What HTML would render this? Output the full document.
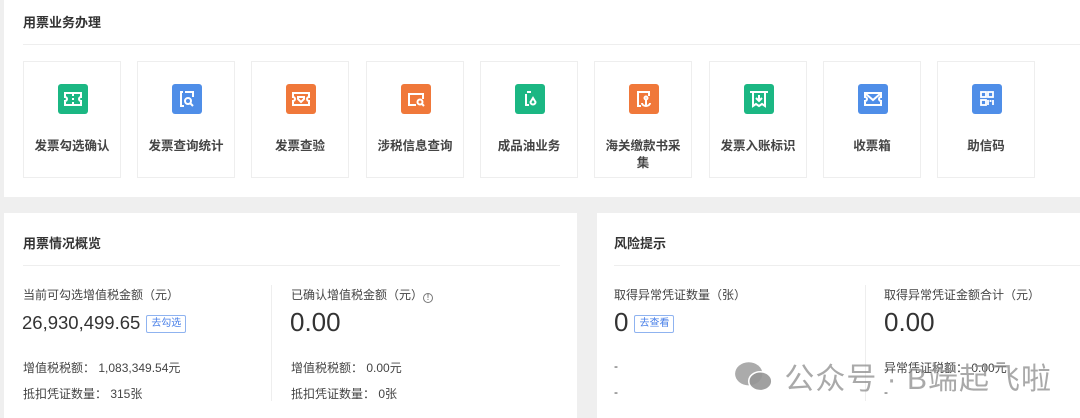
<!DOCTYPE html>
<html><head><meta charset="utf-8"><style>
*{margin:0;padding:0;box-sizing:border-box}
body{width:1080px;height:418px;background:#efefef;font-family:"Liberation Sans","Noto Sans CJK SC",sans-serif;color:#333;position:relative;overflow:hidden}
.card{position:absolute;background:#fff}
.title{position:absolute;font-size:13px;font-weight:bold;color:#333}
.hr{position:absolute;height:1px;background:#eee}
.tile{position:absolute;top:61px;width:98px;height:117px;border:1px solid #eee;text-align:center}
.ic{position:absolute;left:34px;top:22px;width:30px;height:30px;border-radius:3px}
.ic svg{width:30px;height:30px}
.lb{position:absolute;left:0;right:0;top:76px;font-size:12.5px;font-weight:bold;color:#444;line-height:17px}
.t{position:absolute;font-size:12px;color:#444;white-space:nowrap}
.big{position:absolute;color:#333;white-space:nowrap}
.btn{display:inline-block;border:1px solid #8fb3f0;color:#4a80e8;font-size:10px;padding:1px 4px;border-radius:2px;vertical-align:middle;margin-left:6px;line-height:14px}
.vl{position:absolute;width:1px;background:#eee}
</style></head><body>
<div class="card" style="left:4px;top:0;width:1076px;height:197px"></div>
<div class="title" style="left:23px;top:12px">用票业务办理</div>
<div class="hr" style="left:23px;top:44px;width:1057px"></div>

<div class="tile" style="left:23px"><div class="ic" style="background:#1bb783"><svg viewBox="0 0 30 30" fill="none" stroke="#fff" stroke-width="2"><path d="M7 9h16v4a2 2 0 0 0 0 4v4H7v-4a2 2 0 0 0 0-4z"/><path d="M15 10v2M15 14v2M15 18v2"/></svg></div><div class="lb">发票勾选确认</div></div>
<div class="tile" style="left:137px"><div class="ic" style="background:#4f8ee8"><svg viewBox="0 0 30 30" fill="none" stroke="#fff" stroke-width="2"><path d="M11 8H9v14h3M13 8h8v5"/><circle cx="16" cy="17" r="3"/><path d="M18 19l3 3"/></svg></div><div class="lb">发票查询统计</div></div>
<div class="tile" style="left:251px"><div class="ic" style="background:#f0783a"><svg viewBox="0 0 30 30" fill="none" stroke="#fff" stroke-width="2"><path d="M7 9h16v4a2 2 0 0 0 0 4v4H7v-4a2 2 0 0 0 0-4z"/><path d="M12 13h6v2l-3 3-3-3z"/></svg></div><div class="lb">发票查验</div></div>
<div class="tile" style="left:366px"><div class="ic" style="background:#f0783a"><svg viewBox="0 0 30 30" fill="none" stroke="#fff" stroke-width="2"><path d="M15 21H8V10h14v5"/><circle cx="19" cy="18" r="2.5"/><path d="M21 20l2 2"/></svg></div><div class="lb">涉税信息查询</div></div>
<div class="tile" style="left:480px"><div class="ic" style="background:#1bb783"><svg viewBox="0 0 30 30" fill="none" stroke="#fff" stroke-width="2"><path d="M12 8h4M11 10v11h3"/><path d="M18 14l-2.5 4a2.5 2.5 0 1 0 5 0z"/></svg></div><div class="lb">成品油业务</div></div>
<div class="tile" style="left:594px"><div class="ic" style="background:#f0783a"><svg viewBox="0 0 30 30" fill="none" stroke="#fff" stroke-width="2"><path d="M12 22H9V8h11v4"/><circle cx="17" cy="14" r="1.5"/><path d="M17 16v6M13 19a4 3 0 0 0 8 0"/></svg></div><div class="lb">海关缴款书采<br>集</div></div>
<div class="tile" style="left:709px"><div class="ic" style="background:#1bb783"><svg viewBox="0 0 30 30" fill="none" stroke="#fff" stroke-width="2"><path d="M6 8h18M9 8v14l3-2 3 2 3-2 3 2V8"/><path d="M15 11v6M12 14l3 3 3-3"/></svg></div><div class="lb">发票入账标识</div></div>
<div class="tile" style="left:823px"><div class="ic" style="background:#4f8ee8"><svg viewBox="0 0 30 30" fill="none" stroke="#fff" stroke-width="2"><path d="M7 9h16v4a2 2 0 0 0 0 4v4H7v-4a2 2 0 0 0 0-4z"/><path d="M8 10l7 6 7-6"/></svg></div><div class="lb">收票箱</div></div>
<div class="tile" style="left:937px"><div class="ic" style="background:#4f8ee8"><svg viewBox="0 0 30 30" fill="none" stroke="#fff" stroke-width="1.8"><rect x="9" y="8" width="5" height="5"/><rect x="16" y="8" width="5" height="5"/><rect x="9" y="16" width="5" height="5"/><path d="M16 16v5M18.5 16v2M21 16v5"/></svg></div><div class="lb">助信码</div></div>

<div class="card" style="left:4px;top:213px;width:573px;height:205px"></div>
<div class="card" style="left:597px;top:213px;width:483px;height:205px"></div>
<div class="title" style="left:23px;top:233px">用票情况概览</div>
<div class="hr" style="left:23px;top:265px;width:537px"></div>
<div class="title" style="left:614px;top:233px">风险提示</div>
<div class="hr" style="left:614px;top:265px;width:466px"></div>
<div class="vl" style="left:271px;top:285px;height:116px"></div>
<div class="vl" style="left:865px;top:285px;height:116px"></div>

<div class="t" style="left:23px;top:286px">当前可勾选增值税金额（元）</div>
<div class="big" style="left:22px;top:312px;font-size:18.5px">26,930,499.65<span class="btn">去勾选</span></div>
<div class="t" style="left:23px;top:359px">增值税税额：&nbsp;1,083,349.54元</div>
<div class="t" style="left:23px;top:385px">抵扣凭证数量：&nbsp;315张</div>

<div class="t" style="left:291px;top:286px">已确认增值税金额（元）<span style="display:inline-block;width:10px;height:10px;border:1px solid #777;border-radius:50%;font-size:8px;line-height:8px;text-align:center;vertical-align:-1px">!</span></div>
<div class="big" style="left:290px;top:307px;font-size:26px">0.00</div>
<div class="t" style="left:291px;top:359px">增值税税额：&nbsp;0.00元</div>
<div class="t" style="left:291px;top:385px">抵扣凭证数量：&nbsp;0张</div>

<div class="t" style="left:614px;top:286px">取得异常凭证数量（张）</div>
<div class="big" style="left:614px;top:307px;font-size:26px">0<span class="btn" style="font-size:10px">去查看</span></div>
<div class="t" style="left:614px;top:359px">-</div>
<div class="t" style="left:614px;top:385px">-</div>

<div class="t" style="left:884px;top:286px">取得异常凭证金额合计（元）</div>
<div class="big" style="left:884px;top:307px;font-size:26px">0.00</div>
<div class="t" style="left:884px;top:359px">异常凭证税额：&nbsp;0.00元</div>
<div class="t" style="left:884px;top:385px">-</div>

<div style="position:absolute;left:733px;top:354px;color:rgba(140,140,140,.75);font-size:30px;white-space:nowrap;letter-spacing:1px">
<svg width="42" height="36" viewBox="0 0 40 34" style="vertical-align:-6px"><ellipse cx="15" cy="14" rx="13" ry="11" fill="rgba(150,150,150,.8)"/><ellipse cx="26" cy="21" rx="11" ry="9" fill="rgba(150,150,150,.9)" stroke="#fff" stroke-width="1.5"/></svg>
公众号 · B端起飞啦</div>
</body></html>
